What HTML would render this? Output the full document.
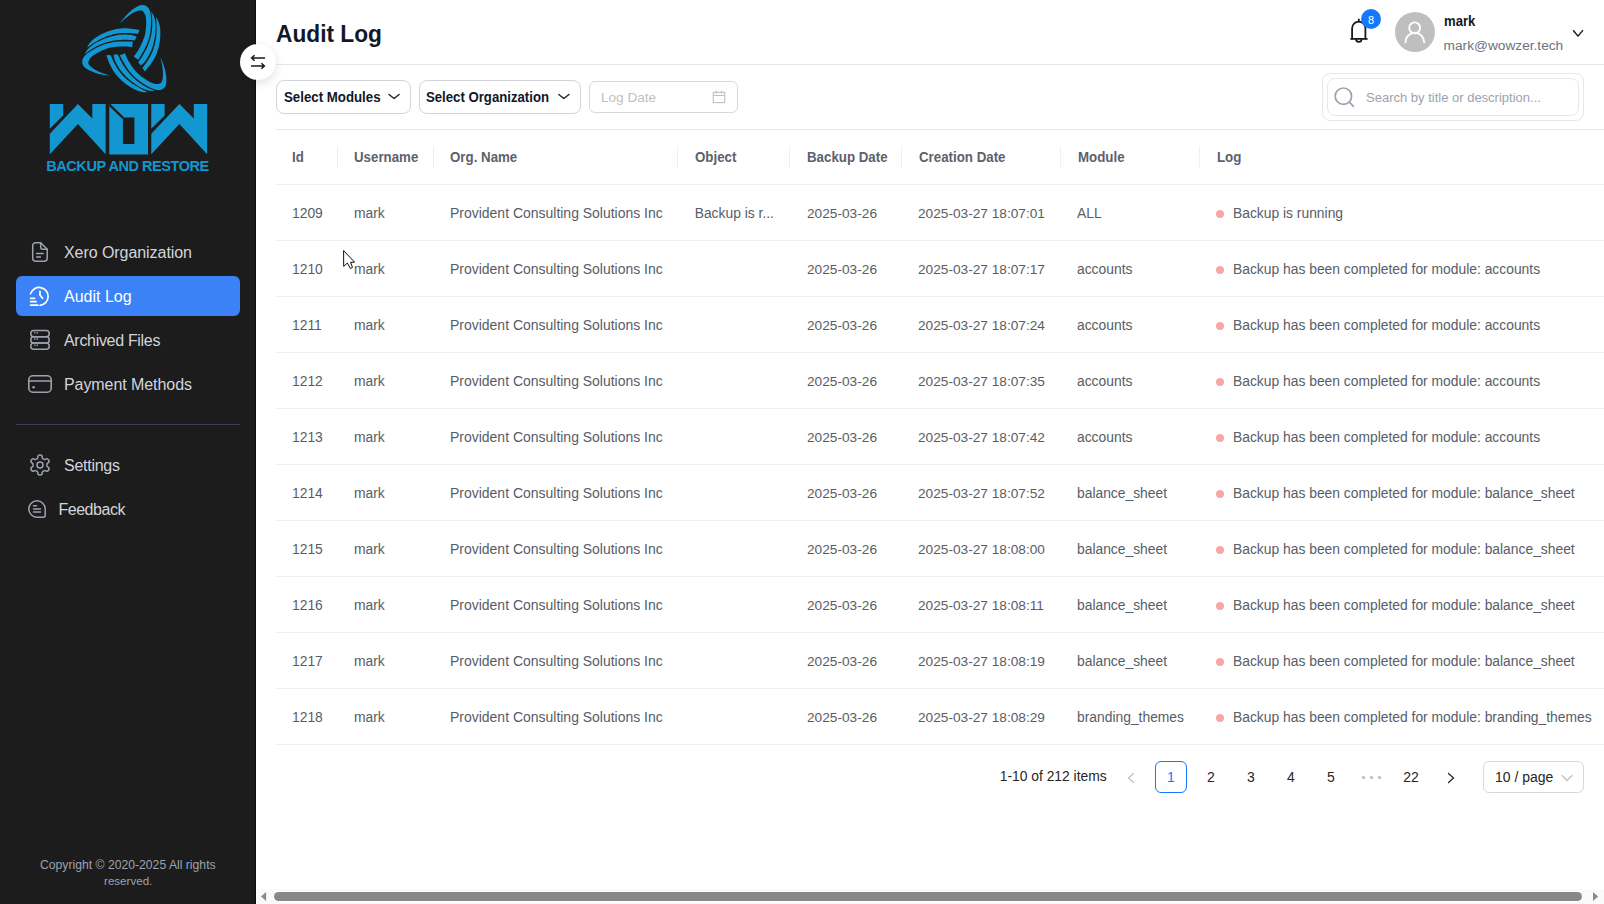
<!DOCTYPE html>
<html><head><meta charset="utf-8"><title>Audit Log</title>
<style>
html,body{margin:0;padding:0;}
body{width:1604px;height:904px;overflow:hidden;position:relative;background:#ffffff;font-family:"Liberation Sans", sans-serif;}
.t{position:absolute;white-space:nowrap;}
.b{position:absolute;box-sizing:border-box;}
</style></head><body>
<div class="b" style="left:0px;top:0px;width:256px;height:904px;background:#1c1c1c;border-right:1px solid #0d0d0d"></div>
<svg class="b" style="left:0;top:0" width="256" height="190" viewBox="0 0 256 190">
<g fill="#1297d0">
<path d="M119.10,24.10 L119.91,23.07 L121.01,21.63 L122.33,19.94 L123.76,18.14 L125.22,16.41 L126.60,14.90 L127.96,13.56 L129.37,12.25 L130.81,11.01 L132.23,9.85 L133.61,8.80 L134.90,7.90 L136.12,7.13 L137.29,6.48 L138.41,5.94 L139.48,5.51 L140.51,5.20 L141.50,5.00 L142.45,4.92 L143.35,4.97 L144.21,5.13 L145.02,5.40 L145.78,5.76 L146.50,6.20 L147.17,6.71 L147.80,7.29 L148.38,7.96 L148.91,8.75 L149.39,9.69 L149.80,10.80 L150.16,12.11 L150.46,13.61 L150.71,15.26 L150.90,17.01 L151.03,18.84 L151.10,20.70 L151.10,22.66 L151.04,24.77 L150.91,26.94 L150.73,29.12 L150.49,31.23 L150.20,33.20 L149.85,35.03 L149.43,36.78 L148.95,38.46 L148.43,40.09 L147.88,41.66 L147.30,43.20 L146.70,44.68 L146.06,46.09 L145.38,47.46 L144.68,48.80 L143.95,50.14 L143.20,51.50 L142.36,52.98 L141.41,54.57 L140.44,56.17 L139.53,57.65 L138.75,58.90 L138.20,59.80 L133.70,56.40 L134.10,55.90 L134.64,55.23 L135.29,54.42 L136.00,53.51 L136.72,52.52 L137.40,51.50 L138.07,50.42 L138.76,49.25 L139.47,48.01 L140.17,46.71 L140.85,45.37 L141.50,44.00 L142.13,42.59 L142.77,41.12 L143.38,39.61 L143.96,38.06 L144.47,36.49 L144.90,34.90 L145.25,33.27 L145.52,31.57 L145.74,29.85 L145.90,28.14 L146.02,26.48 L146.10,24.90 L146.15,23.38 L146.16,21.89 L146.13,20.44 L146.05,19.06 L145.91,17.77 L145.70,16.60 L145.41,15.53 L145.05,14.55 L144.63,13.66 L144.17,12.86 L143.69,12.18 L143.20,11.60 L142.73,11.14 L142.26,10.80 L141.76,10.56 L141.22,10.42 L140.61,10.37 L139.90,10.40 L139.08,10.51 L138.18,10.72 L137.21,11.01 L136.17,11.39 L135.10,11.86 L134.00,12.40 L132.85,13.04 L131.65,13.78 L130.40,14.61 L129.13,15.50 L127.86,16.43 L126.60,17.40 L125.27,18.50 L123.83,19.76 L122.39,21.06 L121.05,22.30 L119.92,23.35 L119.10,24.10Z"/><path d="M151.10,11.60 L151.43,12.11 L151.90,12.77 L152.45,13.58 L153.02,14.50 L153.56,15.52 L154.00,16.60 L154.37,17.74 L154.72,18.97 L155.03,20.29 L155.29,21.71 L155.49,23.24 L155.60,24.90 L155.63,26.73 L155.60,28.73 L155.51,30.84 L155.34,33.01 L155.11,35.18 L154.80,37.30 L154.42,39.40 L153.98,41.52 L153.46,43.65 L152.88,45.76 L152.22,47.81 L151.50,49.80 L150.67,51.77 L149.72,53.74 L148.71,55.67 L147.67,57.49 L146.65,59.16 L145.70,60.60 L144.76,61.83 L143.79,62.88 L142.84,63.77 L141.97,64.52 L141.23,65.12 L140.70,65.60 L138.20,62.20 L138.74,61.42 L139.50,60.38 L140.39,59.12 L141.35,57.73 L142.31,56.27 L143.20,54.80 L144.05,53.30 L144.93,51.72 L145.81,50.06 L146.66,48.35 L147.47,46.59 L148.20,44.80 L148.88,42.97 L149.52,41.09 L150.11,39.16 L150.65,37.19 L151.11,35.20 L151.50,33.20 L151.80,31.13 L152.03,28.97 L152.18,26.79 L152.27,24.65 L152.31,22.60 L152.30,20.70 L152.20,18.88 L152.00,17.08 L151.75,15.37 L151.49,13.83 L151.25,12.55 L151.10,11.60Z"/><path d="M156.00,17.40 L156.23,17.70 L156.54,18.07 L156.92,18.53 L157.32,19.11 L157.73,19.82 L158.10,20.70 L158.48,21.75 L158.89,22.94 L159.31,24.28 L159.69,25.74 L159.99,27.32 L160.20,29.00 L160.31,30.84 L160.36,32.86 L160.34,34.99 L160.24,37.19 L160.06,39.37 L159.80,41.50 L159.44,43.61 L158.98,45.76 L158.44,47.91 L157.83,50.01 L157.18,52.02 L156.50,53.90 L155.78,55.63 L155.02,57.24 L154.21,58.76 L153.35,60.22 L152.45,61.66 L151.50,63.10 L150.42,64.63 L149.17,66.24 L147.89,67.83 L146.67,69.28 L145.64,70.51 L144.90,71.40 L142.40,68.00 L143.04,67.13 L143.93,65.94 L144.99,64.52 L146.11,62.97 L147.21,61.37 L148.20,59.80 L149.10,58.27 L150.00,56.69 L150.88,55.07 L151.72,53.39 L152.50,51.63 L153.20,49.80 L153.83,47.86 L154.41,45.81 L154.94,43.70 L155.40,41.55 L155.79,39.41 L156.10,37.30 L156.32,35.17 L156.45,32.98 L156.51,30.79 L156.53,28.67 L156.51,26.68 L156.50,24.90 L156.46,23.28 L156.38,21.76 L156.28,20.38 L156.16,19.16 L156.06,18.16 L156.00,17.40Z"/><path d="M160.25,56.68 L160.74,57.89 L161.43,59.57 L162.24,61.56 L163.08,63.70 L163.85,65.82 L164.47,67.78 L164.95,69.62 L165.38,71.50 L165.74,73.37 L166.03,75.18 L166.24,76.89 L166.38,78.46 L166.44,79.90 L166.42,81.24 L166.33,82.48 L166.16,83.63 L165.91,84.68 L165.59,85.63 L165.19,86.49 L164.69,87.25 L164.13,87.91 L163.49,88.48 L162.80,88.96 L162.05,89.36 L161.28,89.69 L160.46,89.94 L159.59,90.11 L158.64,90.17 L157.59,90.12 L156.42,89.92 L155.10,89.57 L153.65,89.09 L152.10,88.48 L150.49,87.77 L148.84,86.97 L147.20,86.09 L145.50,85.11 L143.71,84.01 L141.88,82.81 L140.09,81.56 L138.38,80.30 L136.82,79.06 L135.41,77.84 L134.11,76.60 L132.89,75.35 L131.74,74.09 L130.66,72.82 L129.61,71.55 L128.63,70.29 L127.73,69.03 L126.88,67.76 L126.07,66.48 L125.28,65.18 L124.47,63.85 L123.61,62.39 L122.70,60.77 L121.81,59.13 L120.98,57.60 L120.29,56.30 L119.78,55.37 L124.98,53.18 L125.21,53.77 L125.52,54.58 L125.90,55.55 L126.33,56.61 L126.83,57.73 L127.37,58.83 L127.97,59.95 L128.64,61.13 L129.36,62.37 L130.13,63.62 L130.95,64.88 L131.82,66.13 L132.72,67.39 L133.68,68.67 L134.68,69.96 L135.73,71.23 L136.84,72.46 L138.00,73.62 L139.24,74.74 L140.57,75.83 L141.95,76.88 L143.35,77.87 L144.73,78.80 L146.06,79.66 L147.35,80.47 L148.64,81.23 L149.91,81.92 L151.14,82.54 L152.33,83.06 L153.45,83.47 L154.51,83.75 L155.55,83.93 L156.53,84.01 L157.45,84.01 L158.28,83.94 L159.03,83.80 L159.66,83.62 L160.19,83.38 L160.64,83.08 L161.04,82.68 L161.39,82.17 L161.72,81.54 L162.03,80.78 L162.30,79.90 L162.53,78.91 L162.72,77.82 L162.85,76.66 L162.93,75.44 L162.95,74.12 L162.91,72.71 L162.82,71.21 L162.69,69.67 L162.51,68.10 L162.30,66.53 L162.02,64.83 L161.65,62.95 L161.24,61.05 L160.84,59.27 L160.49,57.76 L160.25,56.68Z"/><path d="M155.08,90.64 L154.47,90.68 L153.66,90.75 L152.69,90.82 L151.60,90.86 L150.45,90.81 L149.30,90.66 L148.12,90.40 L146.88,90.09 L145.59,89.71 L144.23,89.22 L142.80,88.62 L141.31,87.89 L139.71,87.01 L137.99,85.98 L136.21,84.84 L134.42,83.61 L132.65,82.32 L130.97,81.00 L129.34,79.62 L127.72,78.18 L126.14,76.67 L124.61,75.11 L123.15,73.51 L121.79,71.89 L120.51,70.19 L119.27,68.38 L118.11,66.54 L117.05,64.72 L116.12,63.01 L115.34,61.47 L114.75,60.04 L114.32,58.67 L114.02,57.40 L113.81,56.28 L113.66,55.34 L113.51,54.64 L117.71,54.17 L118.10,55.03 L118.64,56.21 L119.27,57.60 L120.00,59.13 L120.79,60.70 L121.61,62.20 L122.48,63.69 L123.42,65.24 L124.41,66.83 L125.47,68.42 L126.59,70.00 L127.77,71.53 L129.02,73.03 L130.33,74.53 L131.71,76.01 L133.14,77.46 L134.63,78.85 L136.17,80.19 L137.81,81.49 L139.57,82.76 L141.38,83.98 L143.19,85.14 L144.95,86.19 L146.60,87.13 L148.22,87.96 L149.88,88.69 L151.49,89.32 L152.95,89.86 L154.18,90.30 L155.08,90.64Z"/><path d="M147.60,91.99 L147.23,92.04 L146.75,92.12 L146.16,92.22 L145.46,92.28 L144.64,92.27 L143.70,92.16 L142.60,91.96 L141.36,91.72 L140.00,91.41 L138.54,91.01 L137.02,90.49 L135.46,89.83 L133.81,89.00 L132.04,88.03 L130.20,86.95 L128.35,85.77 L126.54,84.52 L124.83,83.23 L123.19,81.86 L121.55,80.39 L119.97,78.85 L118.45,77.27 L117.03,75.70 L115.74,74.17 L114.60,72.69 L113.59,71.22 L112.68,69.76 L111.85,68.28 L111.05,66.78 L110.28,65.24 L109.49,63.54 L108.72,61.66 L107.99,59.75 L107.34,57.97 L106.79,56.46 L106.39,55.37 L110.58,54.91 L111.02,55.90 L111.60,57.27 L112.30,58.89 L113.08,60.64 L113.92,62.39 L114.78,64.03 L115.66,65.58 L116.57,67.15 L117.54,68.72 L118.58,70.29 L119.71,71.84 L120.94,73.36 L122.31,74.88 L123.79,76.41 L125.36,77.92 L126.99,79.39 L128.65,80.80 L130.32,82.12 L132.05,83.38 L133.89,84.59 L135.75,85.74 L137.58,86.81 L139.31,87.79 L140.86,88.67 L142.28,89.45 L143.64,90.14 L144.89,90.74 L146.00,91.25 L146.91,91.66 L147.60,91.99Z"/><path d="M111.46,76.03 L110.17,75.84 L108.37,75.60 L106.24,75.31 L103.97,74.97 L101.74,74.57 L99.74,74.13 L97.90,73.63 L96.06,73.06 L94.27,72.44 L92.55,71.78 L90.96,71.11 L89.53,70.45 L88.26,69.78 L87.11,69.09 L86.08,68.39 L85.17,67.67 L84.38,66.94 L83.72,66.18 L83.18,65.40 L82.77,64.59 L82.48,63.77 L82.30,62.93 L82.23,62.09 L82.26,61.25 L82.36,60.41 L82.55,59.58 L82.84,58.74 L83.26,57.89 L83.83,57.01 L84.59,56.09 L85.55,55.13 L86.69,54.11 L87.99,53.07 L89.42,52.03 L90.94,51.00 L92.51,50.02 L94.21,49.03 L96.07,48.04 L98.02,47.06 L99.99,46.13 L101.94,45.28 L103.79,44.55 L105.55,43.94 L107.28,43.42 L108.97,43.00 L110.64,42.64 L112.28,42.33 L113.90,42.06 L115.49,41.84 L117.03,41.69 L118.55,41.59 L120.06,41.53 L121.58,41.49 L123.14,41.46 L124.84,41.44 L126.69,41.47 L128.56,41.51 L130.30,41.56 L131.77,41.61 L132.83,41.64 L132.13,47.23 L131.50,47.14 L130.64,47.00 L129.62,46.84 L128.48,46.69 L127.27,46.56 L126.04,46.48 L124.77,46.44 L123.41,46.42 L121.98,46.43 L120.51,46.47 L119.01,46.55 L117.49,46.68 L115.95,46.84 L114.36,47.02 L112.75,47.25 L111.12,47.52 L109.50,47.86 L107.91,48.29 L106.32,48.80 L104.72,49.41 L103.12,50.08 L101.56,50.80 L100.06,51.53 L98.65,52.25 L97.31,52.96 L96.01,53.70 L94.77,54.45 L93.62,55.21 L92.58,55.98 L91.66,56.74 L90.88,57.52 L90.21,58.33 L89.65,59.14 L89.19,59.94 L88.84,60.70 L88.58,61.41 L88.42,62.05 L88.36,62.63 L88.40,63.17 L88.55,63.71 L88.81,64.27 L89.19,64.87 L89.70,65.51 L90.33,66.19 L91.07,66.89 L91.92,67.60 L92.86,68.29 L93.88,68.97 L95.00,69.65 L96.25,70.32 L97.59,70.99 L98.99,71.64 L100.44,72.28 L101.91,72.88 L103.52,73.49 L105.33,74.10 L107.18,74.70 L108.93,75.24 L110.40,75.70 L111.46,76.03Z"/><path d="M84.63,54.57 L84.91,54.03 L85.25,53.29 L85.67,52.41 L86.19,51.45 L86.80,50.48 L87.51,49.55 L88.32,48.66 L89.21,47.75 L90.19,46.82 L91.29,45.88 L92.52,44.95 L93.90,44.02 L95.47,43.07 L97.21,42.10 L99.09,41.13 L101.05,40.19 L103.05,39.31 L105.04,38.51 L107.05,37.79 L109.11,37.11 L111.21,36.49 L113.32,35.95 L115.43,35.49 L117.52,35.12 L119.63,34.86 L121.82,34.69 L124.00,34.60 L126.09,34.59 L128.04,34.64 L129.77,34.74 L131.30,34.94 L132.70,35.26 L133.95,35.63 L135.03,36.02 L135.92,36.35 L136.60,36.57 L134.90,40.44 L133.96,40.35 L132.68,40.23 L131.15,40.08 L129.46,39.94 L127.71,39.84 L126.00,39.81 L124.27,39.82 L122.46,39.85 L120.59,39.92 L118.68,40.04 L116.75,40.22 L114.84,40.48 L112.91,40.81 L110.96,41.19 L108.99,41.64 L107.02,42.16 L105.07,42.75 L103.14,43.42 L101.20,44.19 L99.22,45.08 L97.25,46.03 L95.35,47.02 L93.55,48.02 L91.91,48.98 L90.39,49.97 L88.93,51.04 L87.57,52.12 L86.38,53.12 L85.38,53.96 L84.63,54.57Z"/><path d="M87.21,47.42 L87.35,47.07 L87.52,46.62 L87.73,46.06 L88.02,45.42 L88.44,44.72 L89.01,43.95 L89.73,43.10 L90.56,42.15 L91.51,41.12 L92.58,40.06 L93.80,39.00 L95.15,37.98 L96.69,36.97 L98.42,35.92 L100.27,34.87 L102.22,33.86 L104.20,32.92 L106.18,32.08 L108.19,31.34 L110.28,30.66 L112.41,30.06 L114.53,29.53 L116.60,29.09 L118.57,28.74 L120.42,28.50 L122.20,28.35 L123.92,28.30 L125.61,28.31 L127.31,28.37 L129.03,28.47 L130.90,28.64 L132.92,28.91 L134.93,29.24 L136.80,29.56 L138.38,29.84 L139.52,30.04 L137.83,33.90 L136.75,33.78 L135.28,33.60 L133.52,33.40 L131.62,33.20 L129.68,33.05 L127.83,32.98 L126.05,32.96 L124.23,32.97 L122.39,33.02 L120.51,33.14 L118.60,33.34 L116.67,33.65 L114.67,34.07 L112.61,34.59 L110.51,35.19 L108.42,35.87 L106.37,36.60 L104.39,37.39 L102.44,38.26 L100.47,39.24 L98.54,40.28 L96.70,41.33 L94.99,42.34 L93.45,43.24 L92.07,44.08 L90.79,44.91 L89.65,45.70 L88.65,46.40 L87.83,46.99 L87.21,47.42Z"/>
<path d="M49.80,104.03 L63.17,104.03 L63.17,115.48 L49.80,128.85Z"/><path d="M49.80,154.22 L49.80,133.65 L77.91,104.03 L92.31,118.57 L92.31,104.03 L105.67,104.03 L105.67,154.22 L77.91,124.05Z"/><path d="M151.28,104.03 L164.65,104.03 L164.65,115.48 L151.28,128.85Z"/><path d="M151.28,154.22 L151.28,133.65 L179.39,104.03 L193.79,118.57 L193.79,104.03 L207.15,104.03 L207.15,154.22 L179.39,124.05Z"/>
<path fill-rule="evenodd" d="M109.3,103.9 L148,103.9 L148,154.5 L109.3,154.5Z M122.9,117.4 L134.4,117.4 L134.4,144.1 L122.9,144.1Z"/>
</g>
<line x1="109.3" y1="104.6" x2="123.2" y2="118" stroke="#1c1c1c" stroke-width="2.4"/>
</svg>
<div class="t" style="left:46.30px;top:156.98px;font-size:14.5px;line-height:18px;font-weight:700;color:#1297d0;letter-spacing:-0.45px">BACKUP AND RESTORE</div>
<div class="b" style="left:16px;top:276px;width:224px;height:40px;background:#3b82f6;border-radius:6px"></div>
<div class="t" style="left:64.00px;top:243.16px;font-size:16px;line-height:20px;font-weight:400;color:#d1d5db;letter-spacing:-0.06px">Xero Organization</div>
<div class="t" style="left:64.00px;top:287.36px;font-size:16px;line-height:20px;font-weight:400;color:#ffffff;letter-spacing:0px">Audit Log</div>
<div class="t" style="left:64.00px;top:331.26px;font-size:16px;line-height:20px;font-weight:400;color:#d1d5db;letter-spacing:-0.31px">Archived Files</div>
<div class="t" style="left:64.00px;top:375.16px;font-size:16px;line-height:20px;font-weight:400;color:#d1d5db;letter-spacing:-0.07px">Payment Methods</div>
<div class="t" style="left:64.00px;top:456.46px;font-size:16px;line-height:20px;font-weight:400;color:#d1d5db;letter-spacing:-0.26px">Settings</div>
<div class="t" style="left:58.40px;top:500.16px;font-size:16px;line-height:20px;font-weight:400;color:#d1d5db;letter-spacing:-0.45px">Feedback</div>
<svg class="b" style="left:28px;top:240px" width="24" height="24" viewBox="0 0 24 24"><g fill="none" stroke-linecap="round" stroke-linejoin="round" stroke="#9ca3af" stroke-width="1.5"><path d="M12.7,2.75 H7.5 a2.8,2.8 0 0 0 -2.8,2.8 V18.35 a2.8,2.8 0 0 0 2.8,2.8 H16.4 a2.8,2.8 0 0 0 2.8,-2.8 V9.2 Z"/><path d="M12.7,2.75 V7.2 a2,2 0 0 0 2,2 H19.2"/><path d="M8.6,13.5 H15.2 M8.6,17 H12.4"/></g></svg>
<svg class="b" style="left:28px;top:284px" width="24" height="24" viewBox="0 0 24 24"><g fill="none" stroke-linecap="round" stroke-linejoin="round" stroke="#ffffff" stroke-width="1.7"><path d="M2.6,9.6 A9,9 0 1 1 12,21.4"/><path d="M12,7.3 V11.3 L14.6,14.3"/><path d="M2.6,14.3 H6.6 M2.6,17.7 H8.2 M2.6,21.1 H9.8"/></g></svg>
<svg class="b" style="left:28px;top:328px" width="24" height="24" viewBox="0 0 24 24"><g fill="none" stroke-linecap="round" stroke-linejoin="round" stroke="#9ca3af" stroke-width="1.5"><rect x="2.8" y="2.6" width="18.4" height="6.1" rx="3"/><rect x="2.8" y="8.7" width="18.4" height="6.3" rx="3"/><rect x="2.8" y="15" width="18.4" height="6.2" rx="3"/><path d="M6.95,4.5 v0.6 M9.3,4.5 v0.6 M6.95,10.7 v0.6 M9.3,10.7 v0.6 M6.95,16.9 v0.6 M9.3,16.9 v0.6" stroke-width="1.3"/></g></svg>
<svg class="b" style="left:26px;top:372px" width="28" height="24" viewBox="0 0 28 24"><g fill="none" stroke-linecap="round" stroke-linejoin="round" stroke="#9ca3af" stroke-width="1.6"><rect x="2.8" y="3.8" width="22.4" height="16.4" rx="4"/><path d="M2.8,9 H25.2"/></g><circle cx="7.6" cy="15.3" r="1.3" fill="#9ca3af"/></svg>
<svg class="b" style="left:27.9px;top:452.7px" width="24" height="24" viewBox="0 0 24 24"><g fill="none" stroke-linecap="round" stroke-linejoin="round" stroke="#9ca3af" stroke-width="1.5"><path d="M12.22 2h-.44a2 2 0 0 0-2 2v.18a2 2 0 0 1-1 1.73l-.43.25a2 2 0 0 1-2 0l-.15-.08a2 2 0 0 0-2.73.73l-.22.38a2 2 0 0 0 .73 2.73l.15.1a2 2 0 0 1 1 1.72v.51a2 2 0 0 1-1 1.74l-.15.09a2 2 0 0 0-.73 2.73l.22.38a2 2 0 0 0 2.73.73l.15-.08a2 2 0 0 1 2 0l.43.25a2 2 0 0 1 1 1.73V20a2 2 0 0 0 2 2h.44a2 2 0 0 0 2-2v-.18a2 2 0 0 1 1-1.73l.43-.25a2 2 0 0 1 2 0l.15.08a2 2 0 0 0 2.73-.73l.22-.39a2 2 0 0 0-.73-2.73l-.15-.08a2 2 0 0 1-1-1.74v-.5a2 2 0 0 1 1-1.74l.15-.09a2 2 0 0 0 .73-2.73l-.22-.38a2 2 0 0 0-2.73-.73l-.15.08a2 2 0 0 1-2 0l-.43-.25a2 2 0 0 1-1-1.73V4a2 2 0 0 0-2-2z"/><circle cx="12" cy="12" r="3"/></g></svg>
<svg class="b" style="left:25px;top:497px" width="24" height="24" viewBox="0 0 24 24"><g fill="none" stroke-linecap="round" stroke-linejoin="round" stroke="#9ca3af" stroke-width="1.5"><path d="M12,3.8 A8.2,8.2 0 1 0 12,20.2 H18.3 a1.9,1.9 0 0 0 1.9,-1.9 V12 A8.2,8.2 0 0 0 12,3.8 Z"/><path d="M8.5,8.7 H11.5 M8.5,11.9 H15.5 M8.5,14.9 H15.5"/></g></svg>
<div class="b" style="left:16px;top:424px;width:224px;height:1px;background:#374151"></div>
<div class="t" style="left:7.80px;width:240px;text-align:center;top:858.27px;font-size:12.2px;line-height:15px;font-weight:400;color:#9ca3af;">Copyright © 2020-2025 All rights</div>
<div class="t" style="left:8.20px;width:240px;text-align:center;top:874.28px;font-size:11.6px;line-height:14px;font-weight:400;color:#9ca3af;">reserved.</div>
<div class="t" style="left:276.00px;top:18.68px;font-size:24px;line-height:30px;font-weight:700;color:#111827;transform:scaleX(0.946);transform-origin:0 0;">Audit Log</div>
<div class="b" style="left:276px;top:64px;width:1328px;height:1px;background:#e5e7eb"></div>
<svg class="b" style="left:1346px;top:17px" width="26" height="28" viewBox="0 0 26 28"><g fill="none" stroke-linecap="round" stroke-linejoin="round" stroke="#1a1a1a" stroke-width="1.8"><path d="M6.1,21.8 V11.3 a6.65,6.65 0 0 1 13.3,0 V21.8"/><path d="M5.1,21.9 H20.9"/><path d="M12.8,2.4 V4.4"/><path d="M10.1,22.2 a2.7,2.7 0 0 0 5.4,0"/></g></svg>
<div class="b" style="left:1361px;top:9px;width:20px;height:20px;background:#1677ff;border-radius:50%"></div>
<div class="t" style="left:1361.00px;width:20px;text-align:center;top:12.59px;font-size:11px;line-height:14px;font-weight:400;color:#ffffff;">8</div>
<div class="b" style="left:1395px;top:12px;width:40px;height:40px;background:#bfbfbf;border-radius:50%"></div>
<svg class="b" style="left:1395px;top:12px" width="40" height="40" viewBox="0 0 40 40"><g fill="none" stroke-linecap="round" stroke-linejoin="round" stroke="#ffffff" stroke-width="1.9"><circle cx="19.7" cy="15.9" r="5.5"/><path d="M10.4,30.2 a9.4,9.4 0 0 1 18.8,0"/></g></svg>
<div class="t" style="left:1443.60px;top:12.15px;font-size:14px;line-height:18px;font-weight:700;color:#111827;transform:scaleX(0.937);transform-origin:0 0;">mark</div>
<div class="t" style="left:1443.60px;top:36.75px;font-size:13.7px;line-height:17px;font-weight:400;color:#6b7280;">mark@wowzer.tech</div>
<svg class="b" style="left:1570px;top:27px" width="16" height="12" viewBox="0 0 16 12"><path d="M3.5,3.7 L8,9.1 L12.6,3.6" fill="none" stroke-linecap="round" stroke-linejoin="round" stroke="#141414" stroke-width="1.4"/></svg>
<div class="b" style="left:240px;top:44px;width:36px;height:36px;background:#fff;border-radius:50%;box-shadow:0 3px 10px rgba(0,0,0,0.12)"></div>
<svg class="b" style="left:246px;top:50px" width="24" height="24" viewBox="0 0 24 24"><g fill="none" stroke="#1a1a1a" stroke-width="1.5" stroke-linejoin="miter" stroke-linecap="butt"><path d="M5.6,8 H19 M8.6,5.2 L5.6,8 L8.6,10.8"/><path d="M5,16 H18.4 M15.4,13.2 L18.4,16 L15.4,18.8"/></g></svg>
<div class="b" style="left:276px;top:80px;width:135px;height:34px;border:1px solid #d1d5db;border-radius:8px"></div>
<div class="t" style="left:283.50px;top:88.15px;font-size:14px;line-height:18px;font-weight:700;color:#111827;transform:scaleX(0.947);transform-origin:0 0;">Select Modules</div>
<svg class="b" style="left:386px;top:90px" width="16" height="12" viewBox="0 0 16 12"><path d="M3,4.5 L8.05,8.5 L13.1,4.5" fill="none" stroke-linecap="round" stroke-linejoin="round" stroke="#1f2937" stroke-width="1.5"/></svg>
<div class="b" style="left:419px;top:80px;width:162px;height:34px;border:1px solid #d1d5db;border-radius:8px"></div>
<div class="t" style="left:426.30px;top:88.15px;font-size:14px;line-height:18px;font-weight:700;color:#111827;transform:scaleX(0.941);transform-origin:0 0;">Select Organization</div>
<svg class="b" style="left:556px;top:90px" width="16" height="12" viewBox="0 0 16 12"><path d="M2.8,4.5 L7.85,8.5 L12.9,4.5" fill="none" stroke-linecap="round" stroke-linejoin="round" stroke="#1f2937" stroke-width="1.5"/></svg>
<div class="b" style="left:589px;top:81px;width:149px;height:32px;border:1px solid #d9d9d9;border-radius:6px"></div>
<div class="t" style="left:601.00px;top:88.79px;font-size:13.6px;line-height:17px;font-weight:400;color:#bfbfbf;">Log Date</div>
<svg class="b" style="left:710px;top:88px" width="18" height="18" viewBox="0 0 18 18"><g fill="none" stroke="#bfbfbf" stroke-width="1.1"><rect x="3.3" y="4.3" width="11.4" height="10.3"/><path d="M3.3,7.5 H14.7 M6.4,2.8 V5.8 M11.6,2.8 V5.8"/></g></svg>
<div class="b" style="left:1322px;top:73px;width:262px;height:48px;border:1px solid #e5e7eb;border-radius:8px"></div>
<div class="b" style="left:1327px;top:78px;width:252px;height:38px;border:1px solid #e5e7eb;border-radius:8px"></div>
<svg class="b" style="left:1330px;top:84px" width="26" height="26" viewBox="0 0 26 26"><g fill="none" stroke-linecap="round" stroke-linejoin="round" stroke="#9ca3af" stroke-width="1.7"><circle cx="13.4" cy="12.2" r="8.2"/><path d="M19.4,18.2 L23.4,22.3"/></g></svg>
<div class="t" style="left:1366.00px;top:89.70px;font-size:13.0px;line-height:16px;font-weight:400;color:#9ca3af;">Search by title or description...</div>
<div class="b" style="left:276px;top:129px;width:1328px;height:1px;background:#e5e7eb"></div>
<div class="t" style="left:292.00px;top:148.15px;font-size:14px;line-height:18px;font-weight:700;color:#5c626c;transform:scaleX(0.95);transform-origin:0 0;">Id</div>
<div class="t" style="left:354.00px;top:148.15px;font-size:14px;line-height:18px;font-weight:700;color:#5c626c;transform:scaleX(0.95);transform-origin:0 0;">Username</div>
<div class="t" style="left:450.00px;top:148.15px;font-size:14px;line-height:18px;font-weight:700;color:#5c626c;transform:scaleX(0.95);transform-origin:0 0;">Org. Name</div>
<div class="t" style="left:695.00px;top:148.15px;font-size:14px;line-height:18px;font-weight:700;color:#5c626c;transform:scaleX(0.95);transform-origin:0 0;">Object</div>
<div class="t" style="left:807.00px;top:148.15px;font-size:14px;line-height:18px;font-weight:700;color:#5c626c;transform:scaleX(0.95);transform-origin:0 0;">Backup Date</div>
<div class="t" style="left:918.70px;top:148.15px;font-size:14px;line-height:18px;font-weight:700;color:#5c626c;transform:scaleX(0.95);transform-origin:0 0;">Creation Date</div>
<div class="t" style="left:1077.70px;top:148.15px;font-size:14px;line-height:18px;font-weight:700;color:#5c626c;transform:scaleX(0.95);transform-origin:0 0;">Module</div>
<div class="t" style="left:1217.00px;top:148.15px;font-size:14px;line-height:18px;font-weight:700;color:#5c626c;transform:scaleX(0.95);transform-origin:0 0;">Log</div>
<div class="b" style="left:337px;top:146px;width:1px;height:22px;background:#f0f0f0"></div>
<div class="b" style="left:433px;top:146px;width:1px;height:22px;background:#f0f0f0"></div>
<div class="b" style="left:677px;top:146px;width:1px;height:22px;background:#f0f0f0"></div>
<div class="b" style="left:789px;top:146px;width:1px;height:22px;background:#f0f0f0"></div>
<div class="b" style="left:901px;top:146px;width:1px;height:22px;background:#f0f0f0"></div>
<div class="b" style="left:1060px;top:146px;width:1px;height:22px;background:#f0f0f0"></div>
<div class="b" style="left:1199px;top:146px;width:1px;height:22px;background:#f0f0f0"></div>
<div class="b" style="left:276px;top:184px;width:1328px;height:1px;background:#f0f0f0"></div>
<div class="t" style="left:292.00px;top:204.70px;font-size:13.85px;line-height:17px;font-weight:400;color:#575d67;">1209</div>
<div class="t" style="left:354.00px;top:204.70px;font-size:13.85px;line-height:17px;font-weight:400;color:#575d67;">mark</div>
<div class="t" style="left:450.00px;top:204.66px;font-size:13.98px;line-height:17px;font-weight:400;color:#575d67;">Provident Consulting Solutions Inc</div>
<div class="t" style="left:694.70px;top:204.70px;font-size:13.85px;line-height:17px;font-weight:400;color:#575d67;">Backup is r...</div>
<div class="t" style="left:807.00px;top:204.75px;font-size:13.7px;line-height:17px;font-weight:400;color:#575d67;">2025-03-26</div>
<div class="t" style="left:918.00px;top:204.76px;font-size:13.68px;line-height:17px;font-weight:400;color:#575d67;">2025-03-27 18:07:01</div>
<div class="t" style="left:1077.00px;top:204.70px;font-size:13.85px;line-height:17px;font-weight:400;color:#575d67;">ALL</div>
<div class="b" style="left:1216px;top:210px;width:8px;height:8px;background:#fca5a5;border-radius:50%"></div>
<div class="t" style="left:1233.00px;top:204.70px;font-size:13.85px;line-height:17px;font-weight:400;color:#575d67;">Backup is running</div>
<div class="b" style="left:276px;top:240px;width:1328px;height:1px;background:#f0f0f0"></div>
<div class="t" style="left:292.00px;top:260.70px;font-size:13.85px;line-height:17px;font-weight:400;color:#575d67;">1210</div>
<div class="t" style="left:354.00px;top:260.70px;font-size:13.85px;line-height:17px;font-weight:400;color:#575d67;">mark</div>
<div class="t" style="left:450.00px;top:260.66px;font-size:13.98px;line-height:17px;font-weight:400;color:#575d67;">Provident Consulting Solutions Inc</div>
<div class="t" style="left:807.00px;top:260.75px;font-size:13.7px;line-height:17px;font-weight:400;color:#575d67;">2025-03-26</div>
<div class="t" style="left:918.00px;top:260.76px;font-size:13.68px;line-height:17px;font-weight:400;color:#575d67;">2025-03-27 18:07:17</div>
<div class="t" style="left:1077.00px;top:260.70px;font-size:13.85px;line-height:17px;font-weight:400;color:#575d67;">accounts</div>
<div class="b" style="left:1216px;top:266px;width:8px;height:8px;background:#fca5a5;border-radius:50%"></div>
<div class="t" style="left:1233.00px;top:260.70px;font-size:13.85px;line-height:17px;font-weight:400;color:#575d67;">Backup has been completed for module: accounts</div>
<div class="b" style="left:276px;top:296px;width:1328px;height:1px;background:#f0f0f0"></div>
<div class="t" style="left:292.00px;top:316.70px;font-size:13.85px;line-height:17px;font-weight:400;color:#575d67;">1211</div>
<div class="t" style="left:354.00px;top:316.70px;font-size:13.85px;line-height:17px;font-weight:400;color:#575d67;">mark</div>
<div class="t" style="left:450.00px;top:316.66px;font-size:13.98px;line-height:17px;font-weight:400;color:#575d67;">Provident Consulting Solutions Inc</div>
<div class="t" style="left:807.00px;top:316.75px;font-size:13.7px;line-height:17px;font-weight:400;color:#575d67;">2025-03-26</div>
<div class="t" style="left:918.00px;top:316.76px;font-size:13.68px;line-height:17px;font-weight:400;color:#575d67;">2025-03-27 18:07:24</div>
<div class="t" style="left:1077.00px;top:316.70px;font-size:13.85px;line-height:17px;font-weight:400;color:#575d67;">accounts</div>
<div class="b" style="left:1216px;top:322px;width:8px;height:8px;background:#fca5a5;border-radius:50%"></div>
<div class="t" style="left:1233.00px;top:316.70px;font-size:13.85px;line-height:17px;font-weight:400;color:#575d67;">Backup has been completed for module: accounts</div>
<div class="b" style="left:276px;top:352px;width:1328px;height:1px;background:#f0f0f0"></div>
<div class="t" style="left:292.00px;top:372.70px;font-size:13.85px;line-height:17px;font-weight:400;color:#575d67;">1212</div>
<div class="t" style="left:354.00px;top:372.70px;font-size:13.85px;line-height:17px;font-weight:400;color:#575d67;">mark</div>
<div class="t" style="left:450.00px;top:372.66px;font-size:13.98px;line-height:17px;font-weight:400;color:#575d67;">Provident Consulting Solutions Inc</div>
<div class="t" style="left:807.00px;top:372.75px;font-size:13.7px;line-height:17px;font-weight:400;color:#575d67;">2025-03-26</div>
<div class="t" style="left:918.00px;top:372.76px;font-size:13.68px;line-height:17px;font-weight:400;color:#575d67;">2025-03-27 18:07:35</div>
<div class="t" style="left:1077.00px;top:372.70px;font-size:13.85px;line-height:17px;font-weight:400;color:#575d67;">accounts</div>
<div class="b" style="left:1216px;top:378px;width:8px;height:8px;background:#fca5a5;border-radius:50%"></div>
<div class="t" style="left:1233.00px;top:372.70px;font-size:13.85px;line-height:17px;font-weight:400;color:#575d67;">Backup has been completed for module: accounts</div>
<div class="b" style="left:276px;top:408px;width:1328px;height:1px;background:#f0f0f0"></div>
<div class="t" style="left:292.00px;top:428.70px;font-size:13.85px;line-height:17px;font-weight:400;color:#575d67;">1213</div>
<div class="t" style="left:354.00px;top:428.70px;font-size:13.85px;line-height:17px;font-weight:400;color:#575d67;">mark</div>
<div class="t" style="left:450.00px;top:428.66px;font-size:13.98px;line-height:17px;font-weight:400;color:#575d67;">Provident Consulting Solutions Inc</div>
<div class="t" style="left:807.00px;top:428.75px;font-size:13.7px;line-height:17px;font-weight:400;color:#575d67;">2025-03-26</div>
<div class="t" style="left:918.00px;top:428.76px;font-size:13.68px;line-height:17px;font-weight:400;color:#575d67;">2025-03-27 18:07:42</div>
<div class="t" style="left:1077.00px;top:428.70px;font-size:13.85px;line-height:17px;font-weight:400;color:#575d67;">accounts</div>
<div class="b" style="left:1216px;top:434px;width:8px;height:8px;background:#fca5a5;border-radius:50%"></div>
<div class="t" style="left:1233.00px;top:428.70px;font-size:13.85px;line-height:17px;font-weight:400;color:#575d67;">Backup has been completed for module: accounts</div>
<div class="b" style="left:276px;top:464px;width:1328px;height:1px;background:#f0f0f0"></div>
<div class="t" style="left:292.00px;top:484.70px;font-size:13.85px;line-height:17px;font-weight:400;color:#575d67;">1214</div>
<div class="t" style="left:354.00px;top:484.70px;font-size:13.85px;line-height:17px;font-weight:400;color:#575d67;">mark</div>
<div class="t" style="left:450.00px;top:484.66px;font-size:13.98px;line-height:17px;font-weight:400;color:#575d67;">Provident Consulting Solutions Inc</div>
<div class="t" style="left:807.00px;top:484.75px;font-size:13.7px;line-height:17px;font-weight:400;color:#575d67;">2025-03-26</div>
<div class="t" style="left:918.00px;top:484.76px;font-size:13.68px;line-height:17px;font-weight:400;color:#575d67;">2025-03-27 18:07:52</div>
<div class="t" style="left:1077.00px;top:484.70px;font-size:13.85px;line-height:17px;font-weight:400;color:#575d67;">balance_sheet</div>
<div class="b" style="left:1216px;top:490px;width:8px;height:8px;background:#fca5a5;border-radius:50%"></div>
<div class="t" style="left:1233.00px;top:484.70px;font-size:13.85px;line-height:17px;font-weight:400;color:#575d67;">Backup has been completed for module: balance_sheet</div>
<div class="b" style="left:276px;top:520px;width:1328px;height:1px;background:#f0f0f0"></div>
<div class="t" style="left:292.00px;top:540.70px;font-size:13.85px;line-height:17px;font-weight:400;color:#575d67;">1215</div>
<div class="t" style="left:354.00px;top:540.70px;font-size:13.85px;line-height:17px;font-weight:400;color:#575d67;">mark</div>
<div class="t" style="left:450.00px;top:540.66px;font-size:13.98px;line-height:17px;font-weight:400;color:#575d67;">Provident Consulting Solutions Inc</div>
<div class="t" style="left:807.00px;top:540.75px;font-size:13.7px;line-height:17px;font-weight:400;color:#575d67;">2025-03-26</div>
<div class="t" style="left:918.00px;top:540.76px;font-size:13.68px;line-height:17px;font-weight:400;color:#575d67;">2025-03-27 18:08:00</div>
<div class="t" style="left:1077.00px;top:540.70px;font-size:13.85px;line-height:17px;font-weight:400;color:#575d67;">balance_sheet</div>
<div class="b" style="left:1216px;top:546px;width:8px;height:8px;background:#fca5a5;border-radius:50%"></div>
<div class="t" style="left:1233.00px;top:540.70px;font-size:13.85px;line-height:17px;font-weight:400;color:#575d67;">Backup has been completed for module: balance_sheet</div>
<div class="b" style="left:276px;top:576px;width:1328px;height:1px;background:#f0f0f0"></div>
<div class="t" style="left:292.00px;top:596.70px;font-size:13.85px;line-height:17px;font-weight:400;color:#575d67;">1216</div>
<div class="t" style="left:354.00px;top:596.70px;font-size:13.85px;line-height:17px;font-weight:400;color:#575d67;">mark</div>
<div class="t" style="left:450.00px;top:596.66px;font-size:13.98px;line-height:17px;font-weight:400;color:#575d67;">Provident Consulting Solutions Inc</div>
<div class="t" style="left:807.00px;top:596.75px;font-size:13.7px;line-height:17px;font-weight:400;color:#575d67;">2025-03-26</div>
<div class="t" style="left:918.00px;top:596.76px;font-size:13.68px;line-height:17px;font-weight:400;color:#575d67;">2025-03-27 18:08:11</div>
<div class="t" style="left:1077.00px;top:596.70px;font-size:13.85px;line-height:17px;font-weight:400;color:#575d67;">balance_sheet</div>
<div class="b" style="left:1216px;top:602px;width:8px;height:8px;background:#fca5a5;border-radius:50%"></div>
<div class="t" style="left:1233.00px;top:596.70px;font-size:13.85px;line-height:17px;font-weight:400;color:#575d67;">Backup has been completed for module: balance_sheet</div>
<div class="b" style="left:276px;top:632px;width:1328px;height:1px;background:#f0f0f0"></div>
<div class="t" style="left:292.00px;top:652.70px;font-size:13.85px;line-height:17px;font-weight:400;color:#575d67;">1217</div>
<div class="t" style="left:354.00px;top:652.70px;font-size:13.85px;line-height:17px;font-weight:400;color:#575d67;">mark</div>
<div class="t" style="left:450.00px;top:652.66px;font-size:13.98px;line-height:17px;font-weight:400;color:#575d67;">Provident Consulting Solutions Inc</div>
<div class="t" style="left:807.00px;top:652.75px;font-size:13.7px;line-height:17px;font-weight:400;color:#575d67;">2025-03-26</div>
<div class="t" style="left:918.00px;top:652.76px;font-size:13.68px;line-height:17px;font-weight:400;color:#575d67;">2025-03-27 18:08:19</div>
<div class="t" style="left:1077.00px;top:652.70px;font-size:13.85px;line-height:17px;font-weight:400;color:#575d67;">balance_sheet</div>
<div class="b" style="left:1216px;top:658px;width:8px;height:8px;background:#fca5a5;border-radius:50%"></div>
<div class="t" style="left:1233.00px;top:652.70px;font-size:13.85px;line-height:17px;font-weight:400;color:#575d67;">Backup has been completed for module: balance_sheet</div>
<div class="b" style="left:276px;top:688px;width:1328px;height:1px;background:#f0f0f0"></div>
<div class="t" style="left:292.00px;top:708.70px;font-size:13.85px;line-height:17px;font-weight:400;color:#575d67;">1218</div>
<div class="t" style="left:354.00px;top:708.70px;font-size:13.85px;line-height:17px;font-weight:400;color:#575d67;">mark</div>
<div class="t" style="left:450.00px;top:708.66px;font-size:13.98px;line-height:17px;font-weight:400;color:#575d67;">Provident Consulting Solutions Inc</div>
<div class="t" style="left:807.00px;top:708.75px;font-size:13.7px;line-height:17px;font-weight:400;color:#575d67;">2025-03-26</div>
<div class="t" style="left:918.00px;top:708.76px;font-size:13.68px;line-height:17px;font-weight:400;color:#575d67;">2025-03-27 18:08:29</div>
<div class="t" style="left:1077.00px;top:708.70px;font-size:13.85px;line-height:17px;font-weight:400;color:#575d67;">branding_themes</div>
<div class="b" style="left:1216px;top:714px;width:8px;height:8px;background:#fca5a5;border-radius:50%"></div>
<div class="t" style="left:1233.00px;top:708.70px;font-size:13.85px;line-height:17px;font-weight:400;color:#575d67;">Backup has been completed for module: branding_themes</div>
<div class="b" style="left:276px;top:744px;width:1328px;height:1px;background:#f0f0f0"></div>
<div class="t" style="left:999.70px;top:767.70px;font-size:13.85px;line-height:17px;font-weight:400;color:#262626;">1-10 of 212 items</div>
<svg class="b" style="left:1123px;top:770px" width="16" height="16" viewBox="0 0 16 16"><path d="M10.5,3.5 L5.5,8 L10.5,12.5" fill="none" stroke-linecap="round" stroke-linejoin="round" stroke="#bfbfbf" stroke-width="1.2"/></svg>
<div class="b" style="left:1155px;top:761px;width:32px;height:32px;border:1px solid #1677ff;border-radius:6px"></div>
<div class="t" style="left:1155.00px;width:32px;text-align:center;top:768.15px;font-size:14px;line-height:18px;font-weight:400;color:#1677ff;">1</div>
<div class="t" style="left:1195.00px;width:32px;text-align:center;top:768.15px;font-size:14px;line-height:18px;font-weight:400;color:#262626;">2</div>
<div class="t" style="left:1235.00px;width:32px;text-align:center;top:768.15px;font-size:14px;line-height:18px;font-weight:400;color:#262626;">3</div>
<div class="t" style="left:1275.00px;width:32px;text-align:center;top:768.15px;font-size:14px;line-height:18px;font-weight:400;color:#262626;">4</div>
<div class="t" style="left:1315.00px;width:32px;text-align:center;top:768.15px;font-size:14px;line-height:18px;font-weight:400;color:#262626;">5</div>
<div class="t" style="left:1395.00px;width:32px;text-align:center;top:768.15px;font-size:14px;line-height:18px;font-weight:400;color:#262626;">22</div>
<div class="b" style="left:1362px;top:776px;width:2.5px;height:2.5px;background:#bfbfbf;border-radius:50%"></div>
<div class="b" style="left:1370px;top:776px;width:2.5px;height:2.5px;background:#bfbfbf;border-radius:50%"></div>
<div class="b" style="left:1378px;top:776px;width:2.5px;height:2.5px;background:#bfbfbf;border-radius:50%"></div>
<svg class="b" style="left:1443px;top:770px" width="16" height="16" viewBox="0 0 16 16"><path d="M5.5,3.5 L10.5,8 L5.5,12.5" fill="none" stroke-linecap="round" stroke-linejoin="round" stroke="#262626" stroke-width="1.3"/></svg>
<div class="b" style="left:1483px;top:761px;width:101px;height:32px;border:1px solid #d9d9d9;border-radius:6px"></div>
<div class="t" style="left:1495.00px;top:768.15px;font-size:14px;line-height:18px;font-weight:400;color:#262626;">10 / page</div>
<svg class="b" style="left:1559px;top:770px" width="16" height="16" viewBox="0 0 16 16"><path d="M3,5.5 L8,10.5 L13,5.5" fill="none" stroke-linecap="round" stroke-linejoin="round" stroke="#bfbfbf" stroke-width="1.2"/></svg>
<div class="b" style="left:257px;top:889px;width:1347px;height:15px;background:#fafafa"></div>
<div class="b" style="left:274px;top:892px;width:1308px;height:9px;background:#888888;border-radius:4.5px;box-shadow:0 0 0 1px #ffffff"></div>
<svg class="b" style="left:256px;top:888px" width="16" height="16" viewBox="0 0 16 16"><path d="M10.1,4 L5,8.5 L10.1,13Z" fill="#8a8a8a"/></svg>
<svg class="b" style="left:1588px;top:888px" width="16" height="16" viewBox="0 0 16 16"><path d="M5,4 L10.2,8.5 L5,13Z" fill="#8a8a8a"/></svg>
<svg class="b" style="left:340px;top:247px" width="20" height="26" viewBox="0 0 20 26"><path d="M3.6,3.6 L3.7,19.4 L7.4,16.0 L10.4,21.5 L12.5,20.4 L10.6,15.4 L14.6,15.2 Z" fill="#ffffff" stroke="#000000" stroke-width="0.95" stroke-linejoin="round"/></svg>
</body></html>
